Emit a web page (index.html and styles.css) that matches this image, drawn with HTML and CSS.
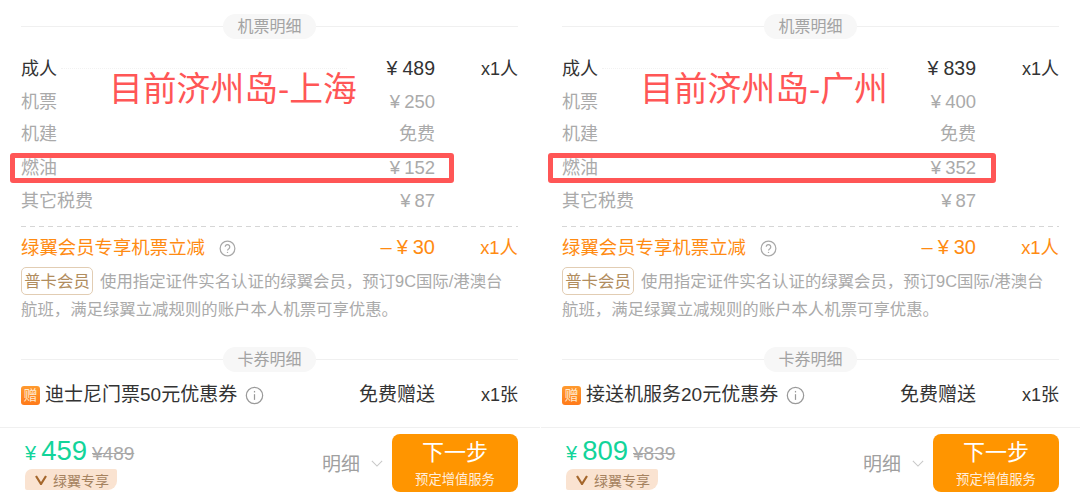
FILE: index.html
```html
<!DOCTYPE html>
<html lang="zh-CN">
<head>
    <meta charset="UTF-8">
    <meta name="viewport" content="width=device-width, initial-scale=1.0">
    <title>机票明细</title>
    <link rel="stylesheet" href="styles.css">
</head>
<body>
    <div class="page">
        <section class="panel">
            <div class="content">
                <div class="section-title"><span>机票明细</span></div>
                <div class="rows">
                    <div class="row main"><span class="name">成人</span><i class="leader"></i><span class="price"><b>¥</b>489</span><span class="count">x1人</span></div>
                    <div class="row"><span class="name">机票</span><span class="price"><b>¥</b>250</span><span class="count"></span></div>
                    <div class="row"><span class="name">机建</span><span class="price free">免费</span><span class="count"></span></div>
                    <div class="row"><span class="name">燃油</span><span class="price"><b>¥</b>152</span><span class="count"></span></div>
                    <div class="row"><span class="name">其它税费</span><span class="price"><b>¥</b>87</span><span class="count"></span></div>
                </div>
                <div class="row discount">
                    <span class="name">绿翼会员专享机票立减
                        <svg class="help" viewBox="0 0 18 18"><circle cx="9" cy="9" r="7.8"/><path d="M6.6 7.2a2.4 2.4 0 1 1 3.8 2c-.9.6-1.4 1-1.4 2"/><path d="M9 12.6v1.1"/></svg>
                    </span>
                    <span class="price"><u>–</u><b>¥</b>30</span><span class="count">x1人</span>
                </div>
                <div class="desc">
                    <p class="desc-first"><span class="tag">普卡会员</span><span>使用指定证件实名认证的绿翼会员，预订9C国际/港澳台</span></p>
                    <p>航班，满足绿翼立减规则的账户本人机票可享优惠。</p>
                </div>
                <div class="section-title cards"><span>卡券明细</span></div>
                <div class="row gift">
                    <span class="name"><em class="gift-icon">赠</em>迪士尼门票50元优惠券
                        <svg class="info" viewBox="0 0 20 20"><circle cx="10" cy="10" r="8.6"/><path d="M10 8.6v6"/><path d="M10 5.2v1.6"/></svg>
                    </span>
                    <span class="price">免费赠送</span><span class="count">x1张</span>
                </div>
            </div>
            <footer class="bar">
                <div class="total">
                    <div class="amount"><span class="unit">¥</span><span class="now">459</span><s class="old">¥489</s></div>
                    <div class="badge"><svg viewBox="0 0 12 10"><path d="M1 1l5 8 5-8"/></svg>绿翼专享</div>
                </div>
                <div class="detail">明细<svg viewBox="0 0 14 8"><path d="M1 1l6 6 6-6"/></svg></div>
                <button class="next"><span>下一步</span><small>预定增值服务</small></button>
            </footer>
            <div class="note">目前济州岛-上海</div>
            <div class="mark"></div>
        </section>

        <section class="panel second">
            <div class="content">
                <div class="section-title"><span>机票明细</span></div>
                <div class="rows">
                    <div class="row main"><span class="name">成人</span><i class="leader"></i><span class="price"><b>¥</b>839</span><span class="count">x1人</span></div>
                    <div class="row"><span class="name">机票</span><span class="price"><b>¥</b>400</span><span class="count"></span></div>
                    <div class="row"><span class="name">机建</span><span class="price free">免费</span><span class="count"></span></div>
                    <div class="row"><span class="name">燃油</span><span class="price"><b>¥</b>352</span><span class="count"></span></div>
                    <div class="row"><span class="name">其它税费</span><span class="price"><b>¥</b>87</span><span class="count"></span></div>
                </div>
                <div class="row discount">
                    <span class="name">绿翼会员专享机票立减
                        <svg class="help" viewBox="0 0 18 18"><circle cx="9" cy="9" r="7.8"/><path d="M6.6 7.2a2.4 2.4 0 1 1 3.8 2c-.9.6-1.4 1-1.4 2"/><path d="M9 12.6v1.1"/></svg>
                    </span>
                    <span class="price"><u>–</u><b>¥</b>30</span><span class="count">x1人</span>
                </div>
                <div class="desc">
                    <p class="desc-first"><span class="tag">普卡会员</span><span>使用指定证件实名认证的绿翼会员，预订9C国际/港澳台</span></p>
                    <p>航班，满足绿翼立减规则的账户本人机票可享优惠。</p>
                </div>
                <div class="section-title cards"><span>卡券明细</span></div>
                <div class="row gift">
                    <span class="name"><em class="gift-icon">赠</em>接送机服务20元优惠券
                        <svg class="info" viewBox="0 0 20 20"><circle cx="10" cy="10" r="8.6"/><path d="M10 8.6v6"/><path d="M10 5.2v1.6"/></svg>
                    </span>
                    <span class="price">免费赠送</span><span class="count">x1张</span>
                </div>
            </div>
            <footer class="bar">
                <div class="total">
                    <div class="amount"><span class="unit">¥</span><span class="now">809</span><s class="old">¥839</s></div>
                    <div class="badge"><svg viewBox="0 0 12 10"><path d="M1 1l5 8 5-8"/></svg>绿翼专享</div>
                </div>
                <div class="detail">明细<svg viewBox="0 0 14 8"><path d="M1 1l6 6 6-6"/></svg></div>
                <button class="next"><span>下一步</span><small>预定增值服务</small></button>
            </footer>
            <div class="note">目前济州岛-广州</div>
            <div class="mark"></div>
        </section>
    </div>
</body>
</html>
```

FILE: styles.css
```css
* {
    margin: 0;
    padding: 0;
    box-sizing: border-box;
}

body {
    width: 1080px;
    height: 498px;
    overflow: hidden;
    background: #fff;
    font-family: "Liberation Sans", "Noto Sans CJK SC", sans-serif;
    color: #333;
}

.page {
    display: flex;
    gap: 1px;
}

.panel {
    position: relative;
    width: 540px;
    height: 498px;
    flex: none;
    display: flex;
    flex-direction: column;
}

.content {
    flex: 1;
    padding: 14px 22px 0 21px;
}

.section-title {
    display: flex;
    align-items: center;
    height: 25px;
    font-size: 16px;
    color: #a3a3a3;
}

.section-title::before,
.section-title::after {
    content: "";
    flex: 1;
    height: 1px;
    background: #f0f0f0;
}

.section-title span {
    width: 93px;
    height: 25px;
    line-height: 25px;
    text-align: center;
    background: #f7f7f7;
    border-radius: 13px;
}

.section-title.cards {
    margin-top: 24px;
}

.rows {
    margin-top: 13px;
    padding-bottom: 10px;
    background: repeating-linear-gradient(90deg, #d6d6d6 0 5px, transparent 5px 9px) bottom / 100% 1px no-repeat;
}

.row {
    display: flex;
    align-items: baseline;
    height: 33px;
    line-height: 33px;
    font-size: 18px;
    color: #aaa;
}

.row .name {
    flex: 1;
    display: flex;
    align-items: baseline;
}

.row .price {
    font-size: 18.5px;
    text-align: right;
}

.row .price.free {
    font-size: 18px;
}

.row b {
    font-weight: normal;
    margin-right: 4px;
}

.row u {
    margin-right: 5px;
    text-decoration: none;
}

.row .count {
    width: 83px;
    text-align: right;
}

.row.main {
    color: #333;
}

.row.main .name {
    flex: none;
}

.row.main .price {
    font-size: 19.5px;
}

.row.main b {
    margin-right: 5px;
}

.leader {
    flex: 1;
    align-self: center;
    margin: 0 40px 0 4px;
    border-top: 1px dotted #f2f2f2;
}

.row.discount {
    height: 34px;
    line-height: 34px;
    margin-top: 3px;
    font-size: 18.4px;
    color: #ff8b12;
}

.row.discount .price {
    font-size: 20px;
}

.row.discount b {
    margin-right: 5px;
}

.help {
    width: 17px;
    height: 17px;
    margin-left: 14px;
    align-self: center;
    fill: none;
    stroke: #a8a8a8;
    stroke-width: 1.3;
}

.desc {
    margin-top: 3px;
    font-size: 16.4px;
    line-height: 28px;
    color: #aaa;
}

.desc-first {
    display: flex;
    gap: 7px;
    white-space: nowrap;
}

.tag {
    width: 72px;
    height: 28px;
    line-height: 26px;
    text-align: center;
    color: #b18d5e;
    border: 1px solid #e2cdb3;
    border-radius: 5px;
}

.row.gift {
    height: 32px;
    line-height: 32px;
    margin-top: 7px;
    font-size: 19px;
    color: #333;
}

.row.gift .price {
    font-size: 19px;
}

.row.gift .count {
    font-size: 18px;
}

.gift-icon {
    align-self: center;
    width: 19px;
    height: 19px;
    line-height: 19px;
    margin-right: 5px;
    font-size: 14px;
    font-style: normal;
    text-align: center;
    color: #ffe9cf;
    background: linear-gradient(#ff9a2e, #ff7a1a);
    border-radius: 3px;
}

.info {
    align-self: center;
    width: 19px;
    height: 19px;
    margin-left: 8px;
    fill: none;
    stroke: #9a9a9a;
    stroke-width: 1.3;
}

.bar {
    display: flex;
    height: 71px;
    padding: 7px 22px 6px 25px;
    border-top: 1px solid #f0f0f0;
}

.total {
    flex: 1;
}

.amount {
    display: flex;
    align-items: baseline;
    height: 32px;
    line-height: 32px;
}

.unit {
    font-size: 20px;
    margin-right: 5px;
    color: #12d49a;
}

.now {
    font-size: 27.5px;
    color: #12d49a;
}

.old {
    margin-left: 5px;
    font-size: 19px;
    color: #a8a8a8;
}

.badge {
    display: flex;
    align-items: center;
    width: 92px;
    height: 21px;
    margin-top: 2px;
    padding-left: 10px;
    font-size: 14px;
    color: #a5825f;
    background: #fae3d1;
    border-radius: 7px 2px 9px 2px;
}

.badge svg {
    width: 12px;
    height: 10px;
    margin-right: 6px;
    fill: none;
    stroke: #a5672c;
    stroke-width: 2.2;
}

.detail {
    display: flex;
    align-items: center;
    height: 58px;
    margin-top: -2px;
    margin-right: 9px;
    font-size: 19px;
    color: #a0a0a0;
}

.detail svg {
    width: 12px;
    height: 7px;
    margin-left: 11px;
    margin-top: 2px;
    fill: none;
    stroke: #c8c8c8;
    stroke-width: 1.2;
}

.next {
    display: flex;
    flex-direction: column;
    align-items: center;
    width: 126px;
    height: 58px;
    margin-top: -1px;
    padding-top: 4px;
    font-family: inherit;
    color: #fff;
    background: #ff9500;
    border: none;
    border-radius: 8px;
}

.next span {
    font-size: 22px;
    line-height: 30px;
}

.next small {
    margin-top: 2px;
    font-size: 13.3px;
    line-height: 20px;
    color: #ffeedd;
}

.note {
    position: absolute;
    left: 109px;
    top: 66px;
    font-size: 33.8px;
    line-height: 46px;
    white-space: nowrap;
    color: #ff5656;
}

.second .note {
    left: 99px;
}

.mark {
    position: absolute;
    left: 10px;
    top: 153px;
    width: 444px;
    height: 30px;
    border: 5px solid #ff5656;
    border-radius: 3px;
}

.second .mark {
    left: 7px;
    width: 448px;
}
```
